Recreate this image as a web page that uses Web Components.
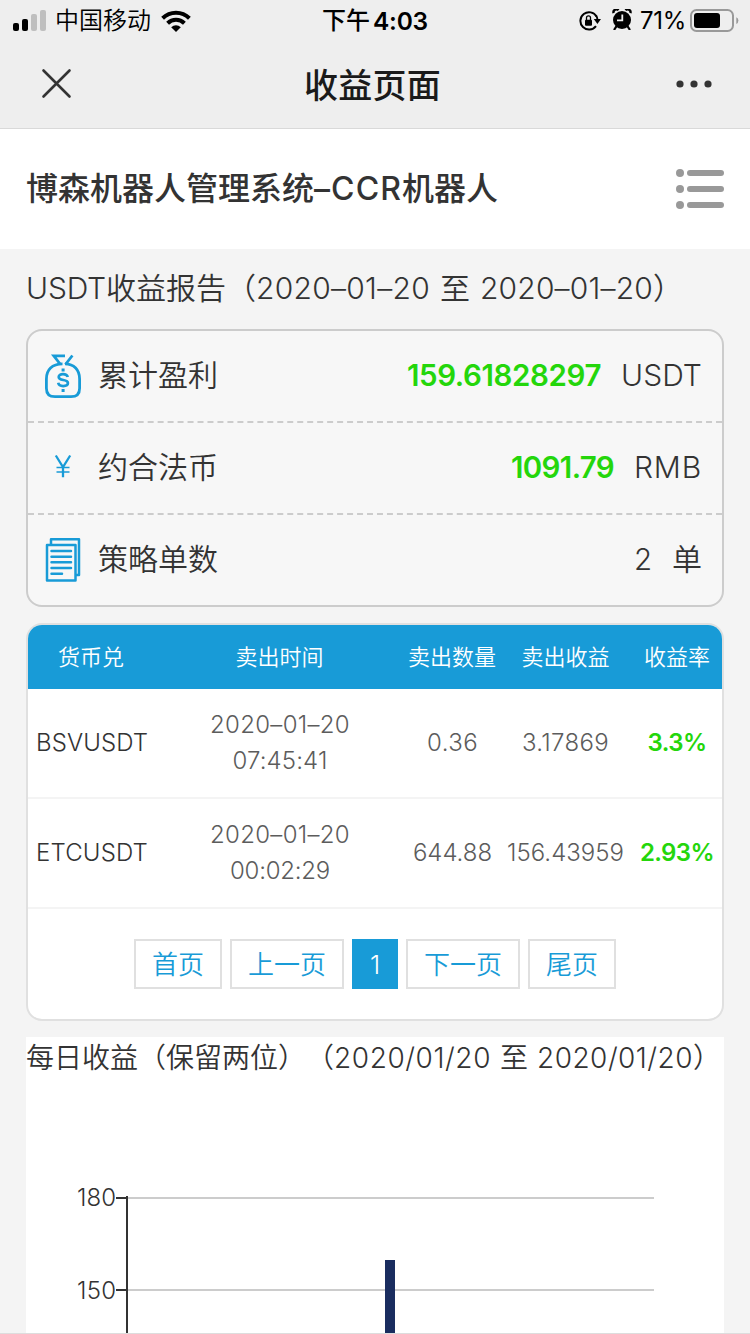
<!DOCTYPE html>
<html lang="zh-CN">
<head>
<meta charset="utf-8">
<title>收益页面</title>
<style>
  html, body { margin: 0; height: 1334px; overflow: hidden; background: #f4f4f4; }
  body { font-family: Inter, "Noto Sans CJK SC", sans-serif; color: #333; font-weight: 350; text-spacing-trim: space-all; }
</style>
</head>
<body>
<income-page></income-page>
<script>
const define = (name, html, ready) => {
  const tpl = document.createElement('template');
  tpl.innerHTML = html.trim();
  customElements.define(name, class extends HTMLElement {
    constructor() {
      super();
      this.attachShadow({ mode: 'open' }).append(tpl.content.cloneNode(true));
    }
    connectedCallback() { if (ready) ready(this, this.shadowRoot); }
  });
};

/* Inline run of text tracked out to a fixed advance width: <fit-run w="81">USDT</fit-run> */
define('fit-run', `<style>:host{display:inline-block;white-space:pre;text-align:left}span{display:inline-block}</style><span><slot></slot></span>`, (el, root) => {
  const w = +el.getAttribute('w');
  el.style.width = w + 'px';
  const nat = root.querySelector('span').getBoundingClientRect().width;
  el.style.letterSpacing = ((w - nat) / el.textContent.length).toFixed(3) + 'px';
});

define('status-bar', `
  <style>
    :host{display:grid;grid-template-columns:322px 1fr 171px;height:40px;color:#000;font-size:24px;line-height:40px;font-weight:400}
    div{display:flex;align-items:center;white-space:nowrap}
    .l{padding-left:13px} .l svg{flex:none} .l b{font-weight:350;margin:1px 10px 0 9px}
    b{font-weight:400} .t{font-weight:450} .t fit-run{margin-left:3px;font-weight:600;font-size:24.5px}
    .r .p{margin:1px 4px 0 8px;font-size:24px} svg{display:block;flex:none}
  </style>
  <div class="l">
    <svg width="33" height="22" viewBox="0 0 33 22"><rect y="13" width="6" height="8" rx="2"/><rect x="9" y="9" width="6" height="12" rx="2"/><g fill="#bfbfbf"><rect x="18" y="4" width="6" height="17" rx="2"/><rect x="27" width="6" height="21" rx="2"/></g></svg>
    <b>中国移动</b>
    <svg width="30" height="22" viewBox="0 0 30 22"><g fill="none" stroke="#000" stroke-width="4"><path d="M1.6 8.2A19.2 19.2 0 0 1 28.4 8.2"/><path d="M6.6 13.2A12 12 0 0 1 23.4 13.2"/></g><path d="M10.2 17.2A7 7 0 0 1 19.8 17.2L15 22Z"/></svg>
  </div>
  <div class="t">下午<fit-run w="55">4:03</fit-run></div>
  <div class="r">
    <svg width="22" height="20" viewBox="0 0 22 20"><path d="M17.6 5.5A8.7 8.7 0 1 0 17 15.2" fill="none" stroke="#000" stroke-width="2"/><path d="M14.800 8H22L18.400 13Z"/><path d="M17 4.500Q18.500 6.500 18.500 9" fill="none" stroke="#000" stroke-width="2"/><rect x="6" y="8.7" width="7" height="6" rx="1"/><path d="M7.500 9V6.800a2 2 0 0 1 4 0V9" fill="none" stroke="#000" stroke-width="1.3"/></svg>
    <svg style="margin:0 0 2px 11px" width="20" height="21" viewBox="0 0 20 21"><circle cx="10" cy="11" r="9"/><path d="M2 21l2.4-3.6M18 21l-2.4-3.6" stroke="#000" stroke-width="2.2"/><path d="M1.6 4.2A3 3 0 0 1 6.6 1.2" fill="none" stroke="#000" stroke-width="2.4"/><path d="M18.4 4.2A3 3 0 0 0 13.4 1.2" fill="none" stroke="#000" stroke-width="2.4"/><path d="M10.3 5.5V11.3H5" fill="none" stroke="#eee" stroke-width="1.8"/></svg>
    <fit-run class="p" w="46">71%</fit-run>
    <svg width="49" height="24" viewBox="0 0 49 24"><rect x="1" y="1" width="42" height="21" rx="5.5" fill="none" stroke="#999" stroke-width="2"/><rect x="4" y="4" width="26" height="15" rx="3"/><path d="M46.3 8.2Q48.4 9 48.4 11.6T46.3 15Z" fill="#999"/></svg>
  </div>`);

define('nav-bar', `
  <style>
    :host{display:grid;grid-template-columns:120px 1fr 120px;align-items:center;height:88px;border-bottom:1px solid #d9d9d9}
    h1{margin:4px 0 0 -5px;text-align:center;font-size:34px;line-height:48px;font-weight:500;color:#1a1a1a;letter-spacing:.2px}
    svg{display:block}
  </style>
  <svg width="120" height="88" viewBox="0 0 120 88"><path d="M43.5 30.5L69.5 56.5M69.5 30.5L43.5 56.5" stroke="#333" stroke-width="2.6" stroke-linecap="round"/></svg>
  <h1><slot></slot></h1>
  <svg width="120" height="88" viewBox="0 0 120 88" fill="#333"><circle cx="50" cy="44" r="3.6"/><circle cx="64" cy="44" r="3.6"/><circle cx="78" cy="44" r="3.6"/></svg>`);

define('site-header', `
  <style>
    :host{display:flex;justify-content:space-between;align-items:center;height:120px;padding:0 26px;background:#fff;box-sizing:border-box}
    h2{margin:0;font-size:32px;line-height:44px;font-weight:500;white-space:nowrap}
    svg{display:block}
  </style>
  <h2><slot></slot></h2>
  <svg width="48" height="42" viewBox="0 0 48 42" fill="#999"><circle cx="4" cy="5" r="4"/><circle cx="4" cy="21" r="4"/><circle cx="4" cy="37" r="4"/><rect x="11" y="2" width="37" height="6" rx="3"/><rect x="11" y="18" width="37" height="6" rx="3"/><rect x="11" y="34" width="37" height="6" rx="3"/></svg>`);

define('summary-card', `
  <style>:host{display:block;border:2px solid #ccc;border-radius:16px;background:#f7f7f7}</style>
  <slot></slot>`);

define('summary-row', `
  <style>
    :host{display:flex;align-items:center;height:90px;padding:0 20px 0 17px;font-size:30px;line-height:44px}
    :host([divided]){border-bottom:2px dashed #ccc}
    .i{width:36px;height:46px;display:flex;align-items:center;justify-content:center;color:#189bd7;margin-right:17px}
    .n{flex:1;margin-top:-3px} .v{color:#24d60b;font-weight:600;font-size:29.5px;margin-right:20px} .v,.u{margin-top:-3px}
    :host([plain]) .v{color:inherit;font-weight:inherit}
  </style>
  <div class="i"><slot name="icon"></slot></div>
  <div class="n"><slot></slot></div><div class="v"><slot name="value"></slot></div><div class="u"><slot name="unit"></slot></div>`);

define('bag-icon', `
  <style>:host,svg{display:block}</style>
  <svg width="36" height="46" viewBox="0 0 36 46" fill="none" stroke="#189bd7" stroke-width="2.8"><path d="M15.500 11.500L8.800 2.900H20M20.400 11.500L27.400 2.500"/><path d="M17.500 10.900C7 10.900 1.4 17 1.4 26V35.200Q1.4 43.700 10 43.700H26Q34.6 43.700 34.6 35.200V26C34.6 17 29 10.900 20 10.900"/><path d="M22.800 24C22 21.200 19.800 21.100 18 21.100C15.500 21.100 13.700 22.200 13.700 24C13.700 28.400 22.900 25.600 22.900 30.100C22.900 32 21 33.100 18.200 33.100C15.400 33.100 13.700 32.200 13.200 29.800" stroke-width="2.700"/><path d="M18.100 15.500V18.500M18.100 36V39" stroke-width="3"/></svg>`);

define('yen-icon', `
  <style>:host,svg{display:block}</style>
  <svg style="margin-top:-4px" width="18" height="24" viewBox="0 0 18 24" fill="none" stroke="#189bd7"><path d="M1.800 1.500L9 13L16.200 1.500M9 13V23.200" stroke-width="2.300"/><path d="M2.500 13.500H15.500M2.500 18H15.500" stroke-width="1.600"/></svg>`);

define('doc-icon', `
  <style>:host,svg{display:block}</style>
  <svg width="36" height="46" viewBox="0 0 36 46" fill="none" stroke="#189bd7" stroke-width="2.500" stroke-linejoin="round"><rect x="2" y="8" width="28.500" height="35.500"/><path d="M6 8V2.300H34V38H31" /><path d="M6.500 14H26M6.500 19.700H26M6.500 25.300H26M6.500 31H26M6.500 36.700H17" stroke-linecap="round"/></svg>`);

define('sales-table', `
  <style>
    :host{display:block;border:2px solid #e0e0e0;border-radius:16px;background:#fff;overflow:hidden}
    .head{display:grid;grid-template-columns:126px 251px 94px 133px 90px;height:64px;background:#189bd7;color:#fff;font-size:22px;line-height:62px;text-align:center}
    .head span{padding-top:1px}
  </style>
  <div class="head"><span>货币兑</span><span>卖出时间</span><span>卖出数量</span><span>卖出收益</span><span>收益率</span></div>
  <slot></slot>`);

define('sales-row', `
  <style>
    :host{display:grid;grid-template-columns:118px 252px 93px 133px 90px;align-items:center;height:108px;padding-left:8px;border-bottom:2px solid #f4f4f4;font-size:24px;line-height:36px;color:#5c5c5c;text-align:center}
    .s{text-align:left;color:#333} .p{color:#24d60b;font-weight:600}
  </style>
  <span class="s"><slot name="symbol"></slot></span><span><slot name="date"></slot><br><slot name="time"></slot></span><span><slot name="amount"></slot></span><span><slot name="profit"></slot></span><span class="p"><slot name="rate"></slot></span>`);

define('page-nav', `
  <style>:host{display:flex;justify-content:center;gap:8px;padding:30px 0}</style><slot></slot>`);
define('page-link', `
  <style>
    :host{display:block;box-sizing:border-box;height:50px;padding:0 16px;border:2px solid #e0e0e0;font-size:26px;line-height:47px;color:#189bd7}
    :host([current]){border-color:#189bd7;background:#189bd7;color:#fff;width:46px;padding:0;text-align:center}
  </style><slot></slot>`);

define('daily-chart', `
  <style>
    :host{display:block;background:#fff;height:296px;overflow:hidden}
    h3{margin:0;font-size:28px;font-weight:350;line-height:42px;height:40px;white-space:nowrap}
    svg{display:block} text{font-size:24px;fill:#333}
  </style>
  <h3><slot></slot></h3>
  <svg width="698" height="256" viewBox="26 1077 698 256">
    <path d="M128 1198H654M128 1290H654" stroke="#ccc" stroke-width="2"/>
    <path d="M127 1196V1333M116 1198H127M116 1290H127" stroke="#333" stroke-width="2"/>
    <rect x="385" y="1260" width="10" height="73" fill="#1a2d5f"/>
    <text x="77" y="1205.500" textLength="39">180</text><text x="77" y="1298.500" textLength="39">150</text>
  </svg>`);

define('income-page', `
  <style>
    :host{display:block;width:750px;height:1334px;box-sizing:border-box;overflow:hidden;background:#f4f4f4;border-bottom:1px solid #ddd}
    header{background:#eee}
    main{padding:0 26px}
    h3{margin:0;height:80px;font-size:30px;font-weight:350;line-height:78px;white-space:nowrap}
    sales-table{margin:16px 0}
  </style>
  <header><status-bar></status-bar><nav-bar>收益页面</nav-bar></header>
  <site-header>博森机器人管理系统<fit-run w="88">–CCR</fit-run>机器人</site-header>
  <main>
    <h3><fit-run w="80">USDT</fit-run>收益报告（<fit-run w="174">2020–01–20</fit-run><fit-run w="10"> </fit-run>至<fit-run w="10"> </fit-run><fit-run w="173">2020–01–20</fit-run>）</h3>
    <summary-card>
      <summary-row divided><bag-icon slot="icon"></bag-icon>累计盈利<fit-run slot="value" w="194">159.61828297</fit-run><fit-run slot="unit" w="81">USDT</fit-run></summary-row>
      <summary-row divided><yen-icon slot="icon"></yen-icon>约合法币<fit-run slot="value" w="103">1091.79</fit-run><fit-run slot="unit" w="68">RMB</fit-run></summary-row>
      <summary-row plain><doc-icon slot="icon"></doc-icon>策略单数<fit-run slot="value" w="18">2</fit-run><span slot="unit">单</span></summary-row>
    </summary-card>
    <sales-table>
      <sales-row><fit-run slot="symbol" w="112">BSVUSDT</fit-run><fit-run slot="date" w="140">2020–01–20</fit-run><fit-run slot="time" w="95">07:45:41</fit-run><fit-run slot="amount" w="51">0.36</fit-run><fit-run slot="profit" w="87">3.17869</fit-run><fit-run slot="rate" w="59">3.3%</fit-run></sales-row>
      <sales-row><fit-run slot="symbol" w="112">ETCUSDT</fit-run><fit-run slot="date" w="140">2020–01–20</fit-run><fit-run slot="time" w="100">00:02:29</fit-run><fit-run slot="amount" w="79">644.88</fit-run><fit-run slot="profit" w="117">156.43959</fit-run><fit-run slot="rate" w="74">2.93%</fit-run></sales-row>
      <page-nav><page-link>首页</page-link><page-link>上一页</page-link><page-link current>1</page-link><page-link>下一页</page-link><page-link>尾页</page-link></page-nav>
    </sales-table>
    <daily-chart>每日收益（保留两位）（<fit-run w="157">2020/01/20</fit-run><fit-run w="9"> </fit-run>至<fit-run w="9"> </fit-run><fit-run w="156">2020/01/20</fit-run>）</daily-chart>
  </main>`);
</script>
</body>
</html>
